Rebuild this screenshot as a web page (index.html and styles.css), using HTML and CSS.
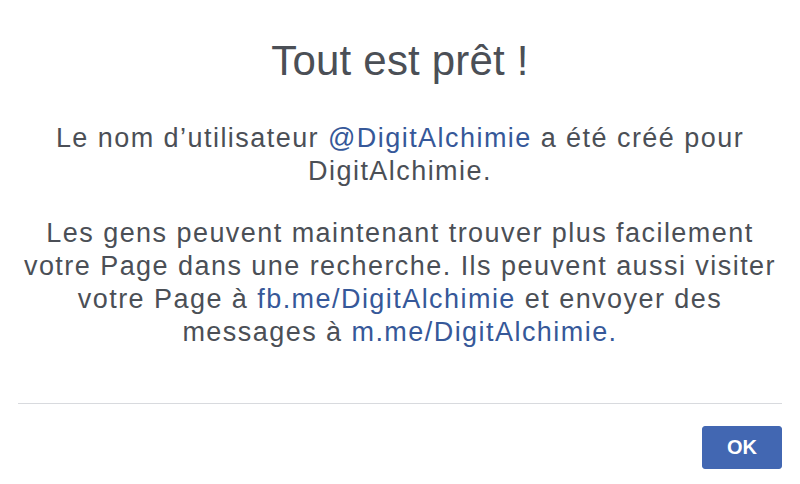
FILE: index.html
```html
<!DOCTYPE html>
<html lang="fr">
<head>
<meta charset="utf-8">
<link rel="stylesheet" href="styles.css">
</head>
<body>
<div class="dialog">
  <h1 class="title">Tout est prêt !</h1>
  <p class="text first">Le nom d’utilisateur <a class="link">@DigitAlchimie</a> a été créé pour<br>DigitAlchimie.</p>
  <p class="text wide">Les gens peuvent maintenant trouver plus facilement<br>votre Page dans une recherche. Ils peuvent aussi visiter<br>votre Page à <a class="link">fb.me/DigitAlchimie</a> et envoyer des<br>messages à <a class="link">m.me/DigitAlchimie.</a></p>
  <div class="divider"></div>
  <div class="footer"><button class="ok">OK</button></div>
</div>
</body>
</html>
```
FILE: styles.css
```css
html, body { margin: 0; padding: 0; background: #fff; }
body { width: 800px; height: 484px; overflow: hidden; font-family: "Liberation Sans", Arial, sans-serif; color: #4b4f56; }
.dialog { padding: 0 18px; }
.title { margin: 0; padding-top: 37px; font-size: 42px; font-weight: normal; text-align: center; line-height: 48px; color: #4b4f56; letter-spacing: 0.2px; }
.text { margin: 0 auto; text-align: center; font-size: 27px; line-height: 33px; white-space: nowrap; letter-spacing: 1.45px; }
.first { margin-top: 37px; }
.wide { margin-top: 29px; }
.link { color: #365899; text-decoration: none; }
.divider { height: 1px; background: #d8dade; margin-top: 54px; }
.footer { display: flex; justify-content: flex-end; padding-top: 22px; }
.ok { width: 80px; height: 43px; background: #4267b2; border: 1px solid #4267b2; border-radius: 3px; color: #fff; font-family: "Liberation Sans", Arial, sans-serif; font-weight: bold; font-size: 20px; padding: 0; }
```
